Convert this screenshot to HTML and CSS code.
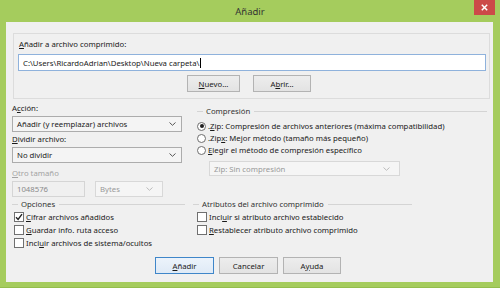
FILE: index.html
```html
<!DOCTYPE html>
<html lang="es">
<head>
<meta charset="utf-8">
<title>Añadir</title>
<link rel="stylesheet" href="styles.css">
</head>
<body>
<div class="window">
  <div class="titlebar">Añadir</div>
  <div class="close"><svg width="7" height="7" viewBox="0 0 7 7"><path d="M0.8 0.8 L6.2 6.2 M6.2 0.8 L0.8 6.2" stroke="#fff" stroke-width="1.5"/></svg></div>
  <div class="client">
    <div class="archive-group">
      <div class="label"><u>A</u>ñadir a archivo comprimido:</div>
      <div class="textfield path">C:\Users\RicardoAdrian\Desktop\Nueva carpeta\<span class="caret"></span></div>
      <div class="btnrow">
        <div class="btn btn-nuevo"><u>N</u>uevo...</div>
        <div class="btn btn-abrir">A<u>b</u>rir...</div>
      </div>
    </div>

    <div class="middle">
      <div class="col-left">
        <div class="label lbl-accion">A<u>c</u>ción:</div>
        <div class="select"><span>Añadir (y reemplazar) archivos</span><svg class="chev" width="7" height="4" viewBox="0 0 7 4"><path d="M0.5 0.5 L3.5 3.3 L6.5 0.5" fill="none" stroke="#555" stroke-width="1"/></svg></div>
        <div class="label lbl-dividir"><u>D</u>ividir archivo:</div>
        <div class="select"><span>No dividir</span><svg class="chev" width="7" height="4" viewBox="0 0 7 4"><path d="M0.5 0.5 L3.5 3.3 L6.5 0.5" fill="none" stroke="#555" stroke-width="1"/></svg></div>
        <div class="label disabled lbl-otro"><u>O</u>tro tamaño</div>
        <div class="size-row">
          <div class="textfield dis-field">1048576</div>
          <div class="select dis-select bytes"><span>Bytes</span><svg class="chev" width="7" height="4" viewBox="0 0 7 4"><path d="M0.5 0.5 L3.5 3.3 L6.5 0.5" fill="none" stroke="#bbb" stroke-width="1"/></svg></div>
        </div>
      </div>
      <div class="col-right">
        <div class="grouphead"><span class="seg"></span><span class="gtitle">Compresión</span><span class="gline"></span></div>
        <div class="opt"><span class="radio checked"></span><span>.<u>Z</u>ip: Compresión de archivos anteriores (máxima compatibilidad)</span></div>
        <div class="opt"><span class="radio"></span><span>.Zip<u>x</u>: Mejor método (tamaño más pequeño)</span></div>
        <div class="opt"><span class="radio"></span><span><u>E</u>legir el método de compresión específico</span></div>
        <div class="select dis-select method"><span>Zip: Sin compresión</span><svg class="chev" width="7" height="4" viewBox="0 0 7 4"><path d="M0.5 0.5 L3.5 3.3 L6.5 0.5" fill="none" stroke="#bbb" stroke-width="1"/></svg></div>
      </div>
    </div>

    <div class="bottom">
      <div class="col-opts">
        <div class="grouphead"><span class="seg"></span><span class="gtitle">Opciones</span><span class="gline"></span></div>
        <div class="opt"><span class="check checked"><svg width="8" height="8" viewBox="0 0 8 8"><path d="M1 4.2 L3.1 6.4 L7 1.2" fill="none" stroke="#222" stroke-width="1.4"/></svg></span><span><u>C</u>ifrar archivos añadidos</span></div>
        <div class="opt"><span class="check"></span><span><u>G</u>uardar info. ruta acceso</span></div>
        <div class="opt"><span class="check"></span><span>Incl<u>u</u>ir archivos de sistema/ocultos</span></div>
      </div>
      <div class="col-attrs">
        <div class="grouphead"><span class="seg"></span><span class="gtitle">Atributos del archivo comprimido</span><span class="gline"></span></div>
        <div class="opt"><span class="check"></span><span>Incl<u>u</u>ir si atributo archivo establecido</span></div>
        <div class="opt"><span class="check"></span><span><u>R</u>establecer atributo archivo comprimido</span></div>
      </div>
    </div>

    <div class="dlg-buttons">
      <div class="btn btn-default"><u>A</u>ñadir</div>
      <div class="btn">Cancelar</div>
      <div class="btn btn-ayuda">A<u>y</u>uda</div>
    </div>
  </div>
</div>
</body>
</html>
```
FILE: styles.css
```css
html, body {
  margin: 0;
  padding: 0;
}
body {
  width: 500px;
  height: 288px;
  overflow: hidden;
  font-family: "Noto Sans", "Open Sans", sans-serif;
  font-size: 7.75px;
  color: #1a1a1a;
}
u {
  text-decoration: underline;
  text-underline-offset: 1px;
}
.window {
  position: relative;
  width: 500px;
  height: 288px;
  box-sizing: border-box;
  background: #a5cc5d;
  display: flex;
  flex-direction: column;
  border-bottom: 1px solid #93bd4c;
}
.titlebar {
  height: 22px;
  flex: none;
  display: flex;
  align-items: center;
  justify-content: center;
  font-size: 9.5px;
  color: #333;
}
.close {
  position: absolute;
  top: 0;
  right: 5px;
  width: 21px;
  height: 15px;
  background: #cc4a48;
  display: flex;
  align-items: center;
  justify-content: center;
}
.close svg { display: block; }
.client {
  flex: 1;
  margin: 0 7px 5px 6px;
  background: #f0f0f0;
  display: flex;
  flex-direction: column;
}
.label {
  height: 12px;
  line-height: 12px;
  white-space: nowrap;
}
.disabled { color: #a3a3a3; }

/* archive group */
.archive-group {
  margin: 11px 3px 0 7px;
  height: 66px;
  box-sizing: border-box;
  border: 1px solid #dcdcdc;
  padding: 4px 3px 0 4px;
  display: flex;
  flex-direction: column;
}
.archive-group .label { margin-left: 1px; }
.textfield {
  box-sizing: border-box;
  background: #fff;
  border: 1px solid #acacac;
  white-space: nowrap;
  display: flex;
  align-items: center;
}
.path {
  margin-top: 4px;
  height: 17px;
  border-color: #8fb2dc;
  padding-left: 4px;
}
.caret {
  display: inline-block;
  width: 1px;
  height: 10px;
  background: #000;
  margin-left: 1px;
}
.btnrow {
  display: flex;
  margin-top: 4px;
  margin-left: 169px;
  gap: 13px;
}
.btn {
  box-sizing: border-box;
  height: 17px;
  width: 59px;
  border: 1px solid #b3b3b3;
  background: linear-gradient(#ededed, #e3e3e3);
  display: flex;
  align-items: center;
  justify-content: center;
  white-space: nowrap;
}
.btn-nuevo { width: 53px; }
.btn-abrir { width: 58px; }

/* middle */
.middle {
  display: grid;
  grid-template-columns: 170px 290px;
  column-gap: 15px;
  padding-left: 6px;
  margin-top: 3px;
}
.col-left {
  display: flex;
  flex-direction: column;
}
.select {
  box-sizing: border-box;
  height: 16px;
  border: 1px solid #acacac;
  background: #f4f4f4;
  display: flex;
  align-items: center;
  justify-content: space-between;
  padding: 0 5px 0 4px;
  white-space: nowrap;
}
.chev { display: block; flex: none; }
.col-left .select { margin-top: 2px; }
.lbl-dividir { margin-top: 1px; }
.lbl-otro { margin-top: 4px; }
.size-row {
  display: flex;
  gap: 10px;
  margin-top: 2px;
}
.dis-field {
  width: 73px;
  height: 16px;
  background: #f0f0f0;
  border-color: #d5d5d5;
  color: #8a8a8a;
  padding-left: 4px;
}
.dis-select {
  background: #f5f5f5;
  border-color: #d8d8d8;
  color: #9a9a9a;
}
.col-left .bytes {
  width: 68px;
  margin-top: 0;
  padding-right: 9px;
}

.col-right {
  display: flex;
  flex-direction: column;
  margin-top: 3px;
}
.grouphead {
  display: flex;
  align-items: center;
  height: 12px;
  line-height: 12px;
  white-space: nowrap;
}
.seg {
  width: 6px;
  height: 1px;
  background: #d4d4d4;
  flex: none;
}
.gtitle { padding: 0 4px 0 3px; color: #333; }
.gline {
  flex: 1;
  height: 1px;
  background: #d4d4d4;
}
.opt {
  display: flex;
  align-items: center;
  height: 12px;
  white-space: nowrap;
}
.col-right .grouphead { margin-bottom: 3px; }
.radio {
  box-sizing: border-box;
  width: 9px;
  height: 9px;
  border: 1px solid #6e6e6e;
  border-radius: 50%;
  background: #fff;
  margin-right: 2px;
  flex: none;
  display: flex;
  align-items: center;
  justify-content: center;
}
.radio.checked::after {
  content: "";
  width: 4px;
  height: 4px;
  border-radius: 50%;
  background: #1e1e1e;
}
.method {
  width: 191px;
  height: 15px;
  margin-top: 5px;
  margin-left: 12px;
  padding-right: 9px;
}

/* bottom */
.bottom {
  display: grid;
  grid-template-columns: 173px 219px;
  column-gap: 8px;
  padding-left: 6px;
  margin-top: 1px;
}
.col-opts, .col-attrs {
  display: flex;
  flex-direction: column;
}
.bottom .opt { height: 13px; }
.bottom .opt:nth-child(2) { margin-top: 0; }
.check {
  box-sizing: border-box;
  width: 10px;
  height: 10px;
  border: 1px solid #707070;
  background: #fff;
  margin: 0 2px 0 2px;
  flex: none;
  display: flex;
  align-items: center;
  justify-content: center;
}
.check svg { display: block; }
.col-attrs .check { margin-left: 4px; }

.dlg-buttons {
  display: flex;
  gap: 5px;
  margin-top: 8px;
  margin-left: 149px;
}
.btn-default {
  border-color: #3f86c9;
  background: linear-gradient(#ecf3fb, #dfeaf6);
}
.btn-ayuda { width: 58px; }
```
